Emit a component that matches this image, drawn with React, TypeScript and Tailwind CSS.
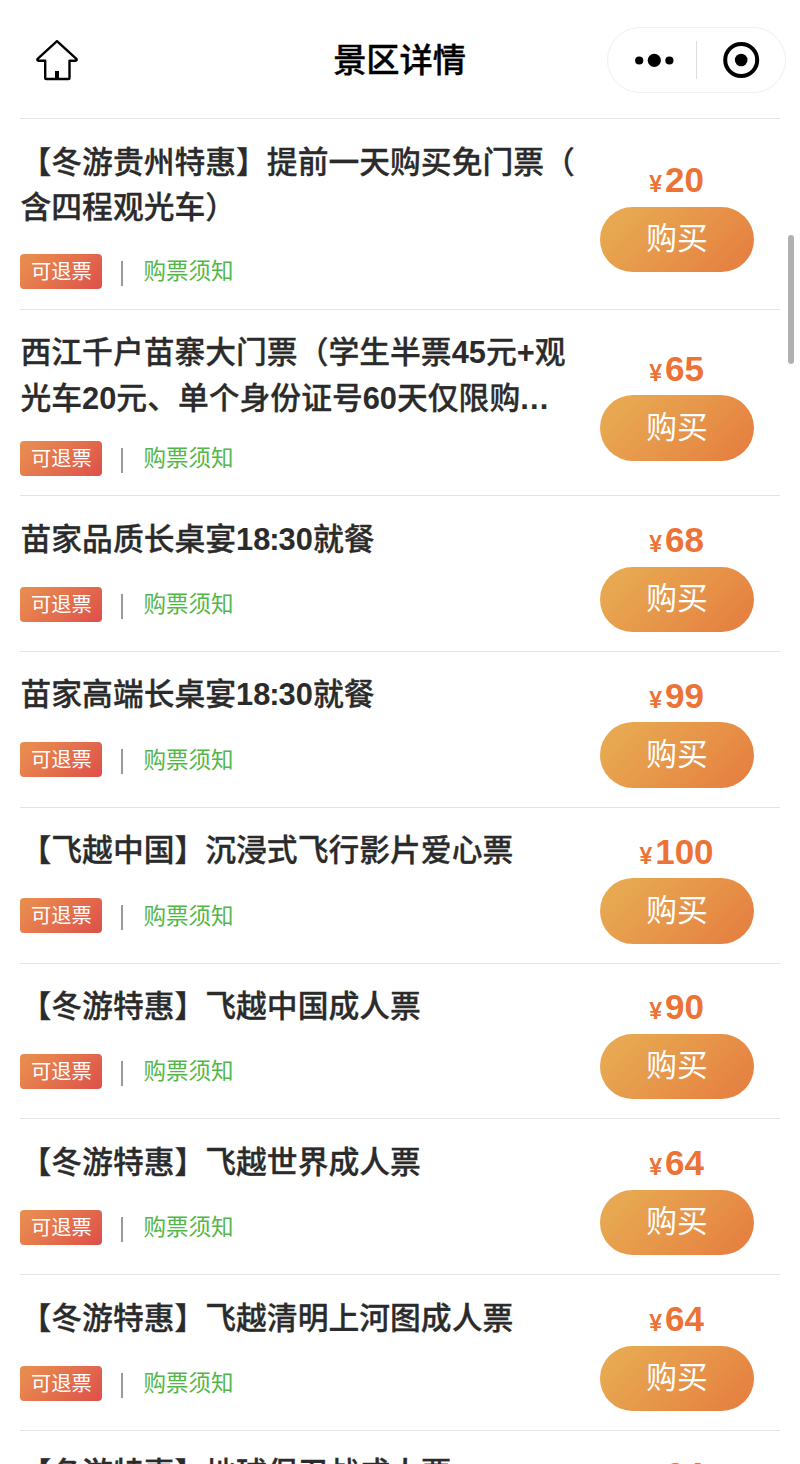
import React from "react";

type Ticket = {
  lines: string[];
  price: number;
  height: string;
  titleHeight: string;
};

const NORMAL = "h-[155.8px]";

const tickets: Ticket[] = [
  { lines: ["【冬游贵州特惠】提前一天购买免门票（", "含四程观光车）"], price: 20, height: "h-[190.8px]", titleHeight: "h-[114.5px]" },
  { lines: ["西江千户苗寨大门票（学生半票45元+观", "光车20元、单个身份证号60天仅限购..."], price: 65, height: "h-[186.4px]", titleHeight: "h-[110.5px]" },
  { lines: ["苗家品质长桌宴18:30就餐"], price: 68, height: NORMAL, titleHeight: "h-[70px]" },
  { lines: ["苗家高端长桌宴18:30就餐"], price: 99, height: NORMAL, titleHeight: "h-[70px]" },
  { lines: ["【飞越中国】沉浸式飞行影片爱心票"], price: 100, height: NORMAL, titleHeight: "h-[70px]" },
  { lines: ["【冬游特惠】飞越中国成人票"], price: 90, height: NORMAL, titleHeight: "h-[70px]" },
  { lines: ["【冬游特惠】飞越世界成人票"], price: 64, height: NORMAL, titleHeight: "h-[70px]" },
  { lines: ["【冬游特惠】飞越清明上河图成人票"], price: 64, height: NORMAL, titleHeight: "h-[70px]" },
  { lines: ["【冬游特惠】地球保卫战成人票"], price: 64, height: NORMAL, titleHeight: "h-[70px]" },
];

const Header = () => {
  return (
    <div className="grid h-[118px] shrink-0 grid-cols-[1fr_auto_1fr] items-center px-3.5">
      <svg width="42" height="42" viewBox="0 0 42 42" fill="none" className="mt-[3px] ml-[22px] cursor-pointer">
        <path
          d="M21 1.2L1.6 18.8Q.8 20.8 2.6 20.8H9.2V37.7Q9.2 39 10.5 39H32.2Q33.5 39 33.5 37.7V20.8H39.4Q41.2 20.8 40.4 18.8Z"
          stroke="#000"
          strokeWidth="2.4"
          strokeLinejoin="round"
        />
        <path d="M19 31H23V39H19Z" fill="#000" />
      </svg>
      <h1 className="mt-1 mr-px text-[33.2px] leading-none font-medium text-black [-webkit-text-stroke:0.4px]">
        景区详情
      </h1>
      <div className="mt-0.5 flex h-[66px] w-[179px] items-center justify-self-end rounded-full border border-[#f0f0f0]">
        <svg width="88" height="64" viewBox="0 0 88 64" className="cursor-pointer">
          <circle cx="31.2" cy="32.5" r="4.1" />
          <circle cx="46.3" cy="32.3" r="6.6" />
          <circle cx="61.4" cy="32.5" r="4.1" />
        </svg>
        <div className="h-[38px] w-px bg-[#dedede]" />
        <svg width="88" height="64" viewBox="0 0 88 64" className="cursor-pointer">
          <circle cx="44.2" cy="32" r="16" fill="none" stroke="#000" strokeWidth="4" />
          <circle cx="44.2" cy="32" r="6.3" />
        </svg>
      </div>
    </div>
  );
};

const latinClass = (part: string) => {
  if (part === ":") return "font-bold -mx-px";
  if (part === "...") return "font-bold tracking-[1.2px]";
  return "font-bold";
};

// latin digits are set bolder than the chinese text around them
const Title = ({ text }: { text: string }) => (
  <>
    {text.split(/(\d+|:|\+|\.{3})/).map((part, i) =>
      i % 2 ? (
        <span key={i} className={latinClass(part)}>
          {part}
        </span>
      ) : (
        <span key={i} className="[-webkit-text-stroke:0.3px]">
          {part}
        </span>
      )
    )}
  </>
);

const TicketRow = ({ ticket }: { ticket: Ticket }) => {
  return (
    <div className={`flex shrink-0 justify-between border-t border-[#e4e4e4] ${ticket.height}`}>
      <div className="pt-[20.5px]">
        <h3
          className={`pl-[0.5px] text-[30.8px] leading-[45.3px] font-medium whitespace-nowrap text-[#2b2b2b] ${ticket.titleHeight}`}
        >
          {ticket.lines.map((line) => (
            <span key={line} className="block">
              <Title text={line} />
            </span>
          ))}
        </h3>
        <div className="flex items-center pl-[0.4px]">
          <span className="flex h-[35px] w-[82px] items-center justify-center rounded bg-linear-135 from-[#e88b4f] from-10% to-[#dd4e49] pt-px text-[20.3px] leading-none text-white">
            可退票
          </span>
          <span className="mt-1 ml-[18.6px] h-[25px] w-0.5 bg-[#999]" />
          <span className="mt-0.5 ml-[20.5px] cursor-pointer text-[22.5px] leading-none text-[#52b748]">购票须知</span>
        </div>
      </div>
      <div className="mr-[26px] flex w-[154px] flex-col items-center justify-center pt-0.5">
        <div className="flex items-baseline font-bold text-[#ec7236]">
          <span className="mr-[3px] -ml-px text-[23px] leading-none">¥</span>
          <span className="text-[35px] leading-[45px]">{ticket.price}</span>
        </div>
        <button className="mt-[4.5px] h-[65.5px] w-full shrink-0 cursor-pointer rounded-full bg-linear-135 from-[#e7a851] from-15% to-[#e57b3f] text-[30.8px] leading-none text-white">
          购买
        </button>
      </div>
    </div>
  );
};

const App = () => {
  return (
    <div className="relative flex h-[1464px] w-[800px] flex-col overflow-hidden bg-white font-['Liberation_Sans','Noto_Sans_CJK_SC',sans-serif] [text-spacing-trim:space-all]">
      <Header />
      <div className="flex flex-col px-5">
        {tickets.map((ticket) => (
          <TicketRow key={ticket.lines[0]} ticket={ticket} />
        ))}
      </div>
      {/* scroll thumb */}
      <div className="absolute top-[235px] right-1.5 h-[129px] w-1.5 rounded-full bg-[#b0b0b0]" />
    </div>
  );
};

export default App;
